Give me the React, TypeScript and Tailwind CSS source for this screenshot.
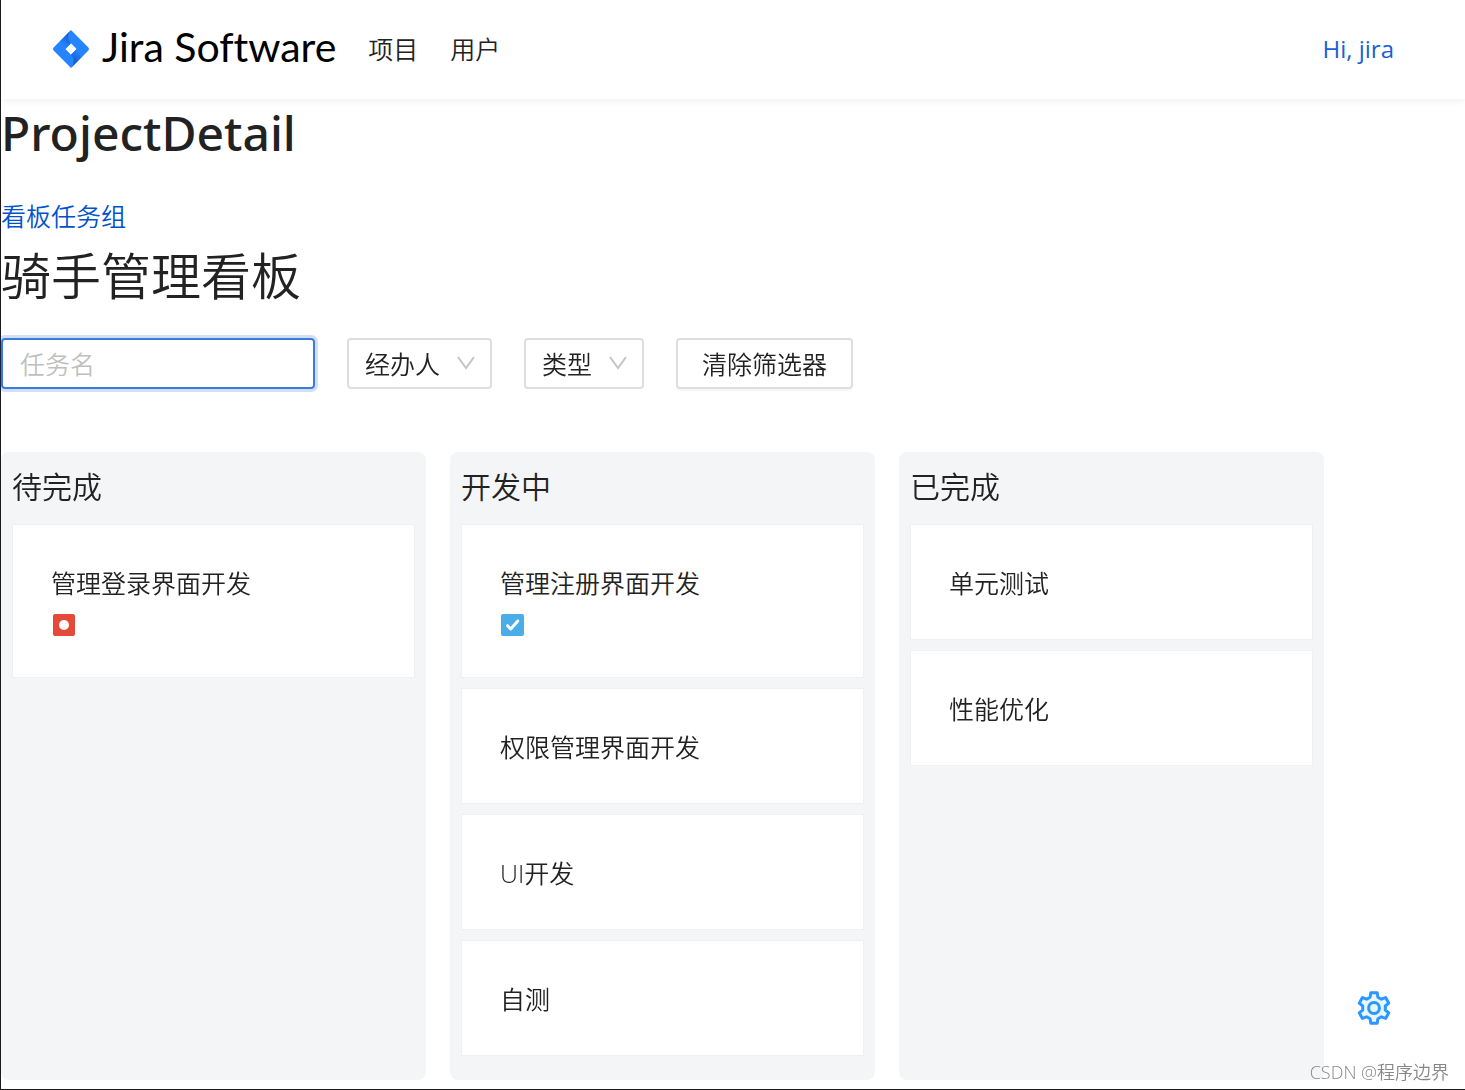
import React, { useState } from "react";

const columns = [
  {
    name: "待完成",
    tasks: [{ name: "管理登录界面开发", type: "bug" }],
  },
  {
    name: "开发中",
    tasks: [
      { name: "管理注册界面开发", type: "task" },
      { name: "权限管理界面开发" },
      { name: "UI开发" },
      { name: "自测" },
    ],
  },
  {
    name: "已完成",
    tasks: [{ name: "单元测试" }, { name: "性能优化" }],
  },
];

const Logo = () => (
  <svg width="38" height="40" viewBox="0 0 38 40" aria-hidden="true">
    <defs>
      <linearGradient id="logoTop" x1="19" y1="6" x2="11" y2="16" gradientUnits="userSpaceOnUse">
        <stop offset="0" stopColor="#0f58d0" />
        <stop offset="1" stopColor="#2684ff" />
      </linearGradient>
      <linearGradient id="logoBottom" x1="20" y1="33" x2="28" y2="23" gradientUnits="userSpaceOnUse">
        <stop offset="0" stopColor="#0f58d0" />
        <stop offset="1" stopColor="#2684ff" />
      </linearGradient>
    </defs>
    <path
      fill="#2684ff"
      fillRule="evenodd"
      d="M19 1 36.4 18.6Q37.6 20 36.4 21.4L19 39 1.6 21.4Q.4 20 1.6 18.6ZM19 14.3 13.4 20 19 25.7 24.6 20Z"
    />
    <path fill="url(#logoTop)" d="M19 14.3c-3.6-3.7-3.7-9.5 0-13.3L8 12.2l5.4 7.8Z" />
    <path fill="url(#logoBottom)" d="M19 25.7c3.6 3.7 3.7 9.5 0 13.3L30 27.8 24.6 20Z" />
  </svg>
);

const TaskIcon = ({ type }: { type: string }) =>
  type === "bug" ? (
    <svg width="25" height="24" viewBox="0 0 25 24" role="img" aria-label="bug">
      <rect x="2" y="1" width="22" height="22" rx="2" fill="#e5493a" />
      <circle cx="13" cy="12" r="5" fill="#fff" />
    </svg>
  ) : (
    <svg width="25" height="24" viewBox="0 0 25 24" role="img" aria-label="task">
      <rect x="1" y="1" width="23" height="22" rx="2" fill="#4bade8" />
      <path
        d="m7.5 12.7 3.3 3.3 7-8"
        fill="none"
        stroke="#fff"
        strokeWidth="3"
        strokeLinecap="round"
        strokeLinejoin="round"
      />
    </svg>
  );

const FilterSelect = ({ label, className }: { label: string; className: string }) => (
  <div className={`relative ${className}`}>
    <select
      aria-label={label}
      className="w-full h-[51px] pl-4 appearance-none bg-white border-2 border-[#dedede] rounded-sm outline-none"
    >
      <option>{label}</option>
    </select>
    <svg
      className="absolute right-4 top-[18px] pointer-events-none"
      width="20"
      height="14"
      viewBox="0 0 20 14"
      fill="none"
      stroke="#c4c4c4"
      strokeWidth="2"
    >
      <path d="m2 1 8 11 8-11" />
    </svg>
  </div>
);

const App = () => {
  const [name, setName] = useState("");

  return (
    <div className="min-h-screen flex flex-col bg-white border-l border-b border-[#1b1b1b] text-[25px] leading-[38px] font-[350] text-[#222] font-['Open_Sans','Noto_Sans_CJK_SC',sans-serif]">

      {/* Header */}
      <header className="flex items-center justify-between h-[99px] shrink-0 pl-[51px] pr-[71px] pb-[2px] shadow-[0_2px_8px_rgba(0,0,0,0.06)]">
        <div className="flex items-center">
          <a href="#" className="flex items-center gap-3 text-[41px] font-normal text-black font-['Lato',sans-serif] [font-variant-ligatures:none]">
            <Logo />
            <span className="pb-1">Jira Software</span>
          </a>
          <nav className="flex gap-8 ml-8">
            <a href="#projects">项目</a>
            <a href="#users">用户</a>
          </nav>
        </div>
        <a href="#me" className="text-2xl font-normal text-[#1a5fd6]">Hi, jira</a>
      </header>

      <main className="flex-1 flex flex-col">
        <h1 className="text-5xl leading-[68px] font-medium font-['Noto_Sans',sans-serif]">ProjectDetail</h1>
        <a href="#kanban" className="self-start mt-[30px] text-[#0052cc]">看板任务组</a>
        <h2 className="text-[50px] leading-[82px]">骑手管理看板</h2>

        {/* Filters */}
        <div className="flex flex-wrap gap-8 mt-[21px] mb-[63px]">
          <input
            autoFocus
            aria-label="任务名"
            placeholder="任务名"
            value={name}
            onChange={(e) => setName(e.target.value)}
            className="w-[314px] h-[51px] px-[17px] border-2 border-[#3a7be0] rounded-sm outline-none caret-transparent shadow-[0_0_0_3px_rgba(0,82,204,0.18)] placeholder:text-[#bfbfbf]"
          />
          <FilterSelect label="经办人" className="w-[145px]" />
          <FilterSelect label="类型" className="w-[120px]" />
          <button
            onClick={() => setName("")}
            className="w-[177px] h-[51px] border-2 border-[#dedede] rounded-sm shadow-[0_2px_2px_rgba(0,0,0,0.04)]"
          >
            清除筛选器
          </button>
        </div>

        {/* Kanban columns */}
        <div className="flex-1 flex gap-6 mb-[9px]">
          {columns.map((column) => (
            <section key={column.name} className="flex-1 max-w-[425px] bg-[#f4f5f7] rounded-lg px-[11px] pt-4 pb-6">
              <h3 className="text-[30px] mb-[18px]">{column.name}</h3>

              <div className="flex flex-col gap-[10px]">
                {column.tasks.map((task) => (
                  <div key={task.name} className="bg-white border border-[#f0f0f0] px-[38px] pt-[39px] pb-[37px]">
                    <p>{task.name}</p>
                    {task.type && (
                      <div className="flex items-center h-[38px] pt-2">
                        <TaskIcon type={task.type} />
                      </div>
                    )}
                  </div>
                ))}
              </div>
            </section>
          ))}
        </div>
      </main>

      {/* Settings button */}
      <button aria-label="设置" className="fixed right-[73px] bottom-[64px]">
        <svg width="36" height="36" viewBox="-18 -18 36 36" fill="#e6f7ff" stroke="#2b97ff" strokeWidth="3" strokeLinejoin="round">
          <path d="M-3.9-10.8-3.2-15.2H3.2L3.9-10.8 7.4-8.8 11.6-10.4 14.8-4.8 11.3-2V2L14.8 4.8 11.6 10.4 7.4 8.8 3.9 10.8 3.2 15.2H-3.2L-3.9 10.8-7.4 8.8-11.6 10.4-14.8 4.8-11.3 2V-2L-14.8-4.8-11.6-10.4-7.4-8.8Z" />
          <circle r="5.4" />
        </svg>
      </button>

      <span className="fixed right-4 bottom-0 text-lg leading-9 text-[#888]">CSDN @程序边界</span>
    </div>
  );
};

export default App;
